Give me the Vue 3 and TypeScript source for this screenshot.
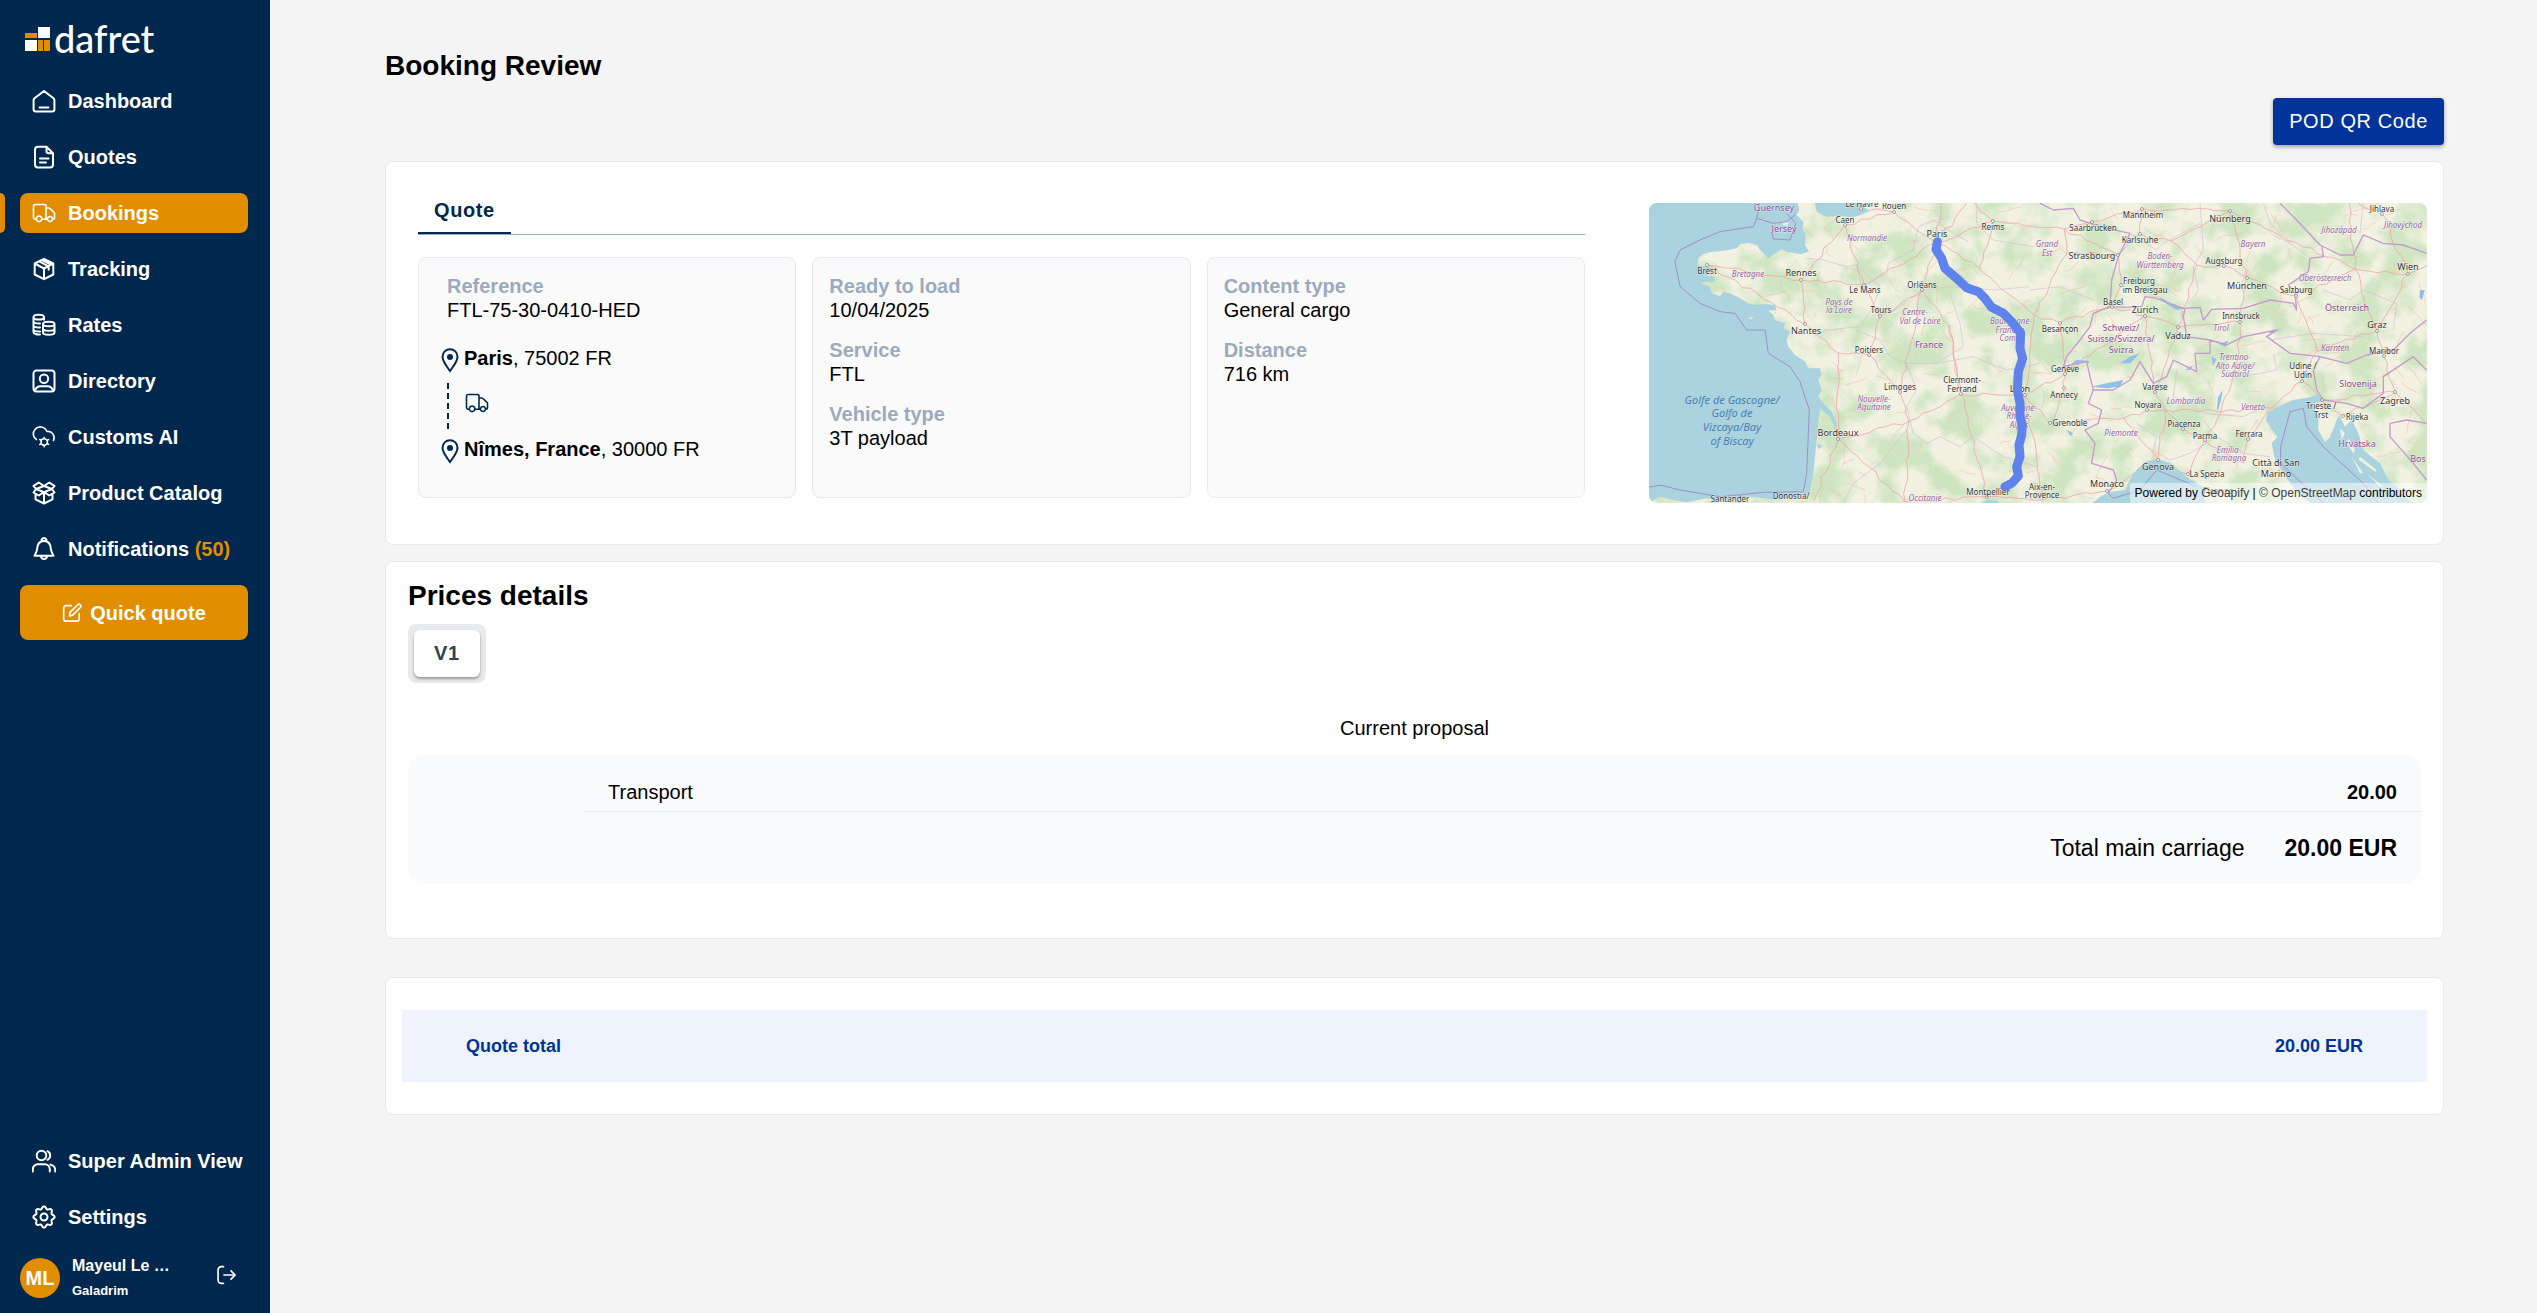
<script setup lang="ts">
interface NavItem {
  label: string
  icon: string
  active?: boolean
  thin?: boolean
  count?: number
}

interface InfoEntry {
  label: string
  value: string
}

type LabelKind = 'town' | 'city' | 'country' | 'region' | 'sea'
type MapLabel = [text: string, x: number, y: number, kind: LabelKind]
type Point = [number, number]

// Eight-lobed cog outline around the centre of a 24-unit box.
function cogOutline(): string {
  const points = Array.from({ length: 96 }, (_, i) => {
    const angle = (i / 96) * Math.PI * 2
    const radius = 9.4 + 1.2 * Math.cos(8 * angle)
    return `${(12 + radius * Math.cos(angle)).toFixed(2)} ${(12 + radius * Math.sin(angle)).toFixed(2)}`
  })
  return `M${points.join('L')}Z`
}

const icons: Record<string, string> = {
  home: 'M12 2 2.5 9.3a2 2 0 0 0-.9 1.7v9.6a2 2 0 0 0 2 2h16.8a2 2 0 0 0 2-2V11a2 2 0 0 0-.9-1.7ZM7.5 18.500h9',
  file: 'M14.5 1.8H6a3 3 0 0 0-3 3v14.6a3 3 0 0 0 3 3h12a3 3 0 0 0 3-3V8.2ZM14.5 1.8v4.4a2 2 0 0 0 2 2H21M8 13.500h8.500M8 17.500h6',
  truck: 'M4.5 18.3H3.2A1.7 1.7 0 0 1 1.5 16.600V5.200A1.700 1.700 0 0 1 3.200 3.500h9.300a1.500 1.500 0 0 1 1.500 1.500v13.300H9.500M14 7h2.600a2 2 0 0 1 1.300.5l3.900 3.600a2 2 0 0 1 .7 1.500v4a1.700 1.700 0 0 1-1.700 1.700M15.500 18.300H14M4.300 17.800a2.800 2.800 0 1 0 5.600 0a2.800 2.800 0 1 0-5.600 0M15.500 18a2.500 2.500 0 1 0 5 0a2.500 2.500 0 1 0-5 0',
  box: 'M12 1.800 21.300 6.500v11L12 22.200 2.700 17.500v-11ZM2.700 6.500 12 11.500l9.300-5M12 11.500v10.700M7.200 4.300l9.500 5v3.500M10 3l9 4.700',
  coins: 'M1.500 4.200c0-3.200 10.500-3.200 10.500 0s-10.500 3.200-10.500 0v15c0 1.500 3 2.400 6.500 2.200M12 4.200v2.500M1.500 8.500c0 1.500 3 2.200 6.500 2M1.500 12.500c0 1.500 3 2.200 6.500 2M1.500 16.500c0 1.500 3 2.200 6.500 2M11 11c0-3 11.500-3 11.500 0s-11.500 3-11.500 0v8.500c0 3 11.500 3 11.500 0V11M11 15.500c0 3 11.500 3 11.500 0',
  contact: 'M4.500 1.500h15a3 3 0 0 1 3 3v15a3 3 0 0 1-3 3h-15a3 3 0 0 1-3-3v-15a3 3 0 0 1 3-3ZM7.800 9.800a4.200 4.200 0 1 0 8.400 0a4.200 4.200 0 1 0-8.400 0M3 21.500c1-3 3-4.300 5.500-4.300h7c2.500 0 4.500 1.300 5.500 4.300',
  cloud: 'M4.500 14.500A6.500 6.500 0 0 1 3 4.500C6 .8 12.500.8 15 6.500c5-.8 8.500 4.200 6.500 9M9 17a3.200 3.200 0 1 0 6.400 0a3.200 3.200 0 1 0-6.400 0M12.200 12.500v1.300M12.200 20.200v1.500M7.800 14.500l1.500.9M15 18.500l1.600.9M7.800 19.500l1.500-.9M15 15.400l1.600-.9',
  openBox: 'M12 5 6.800 1.500 1.500 4.800 4 8l-2.500 3.500 5.300 3L12 11.200l5.200 3.300 5.300-3L20 8l2.500-3.200-5.300-3.300ZM4 8l8-3 8 3-8 3.200ZM3.500 13.500v4.800l8.500 4.200 8.500-4.200v-4.800M12 11.500v11',
  bell: 'M9.700 4.500a2.500 2.500 0 1 1 4.600 0M12 4C6.500 4 5.200 8 5 12.500c-.1 2.500-2 4.500-2.500 6.300h19c-.5-1.800-2.400-3.800-2.500-6.300C18.800 8 17.500 4 12 4M9 19c.2 4 5.800 4 6 0',
  users: 'M.8 22.500v-2.200a5 5 0 0 1 5-5h7a5 5 0 0 1 5 5v2.200M4.700 6.500a4.800 4.800 0 1 0 9.600 0a4.800 4.800 0 1 0-9.600 0M15.500 2.200a4.800 4.800 0 0 1 0 8.600M18.500 15.600c3 .8 4.700 2.700 4.700 5.200v1.700',
  gear: `${cogOutline()}M8.500 12a3.500 3.500 0 1 0 7 0a3.500 3.500 0 1 0-7 0`,
  edit: 'M11 3.200H5a3 3 0 0 0-3 3v12.600a3 3 0 0 0 3 3h12.600a3 3 0 0 0 3-3v-6M9 15.500l.6-4.200 9.200-9.200a2.200 2.200 0 0 1 3.200 3.200l-9.200 9.200Z',
  logout: 'M9 2H6.500a4 4 0 0 0-4 4v12a4 4 0 0 0 4 4H9M9.500 12h13M18 7l5 5-5 5',
}

const navItems: NavItem[] = [
  { label: 'Dashboard', icon: 'home' },
  { label: 'Quotes', icon: 'file' },
  { label: 'Bookings', icon: 'truck', active: true, thin: true },
  { label: 'Tracking', icon: 'box' },
  { label: 'Rates', icon: 'coins' },
  { label: 'Directory', icon: 'contact' },
  { label: 'Customs AI', icon: 'cloud', thin: true },
  { label: 'Product Catalog', icon: 'openBox' },
  { label: 'Notifications', icon: 'bell', count: 50 },
]

const footerItems: NavItem[] = [
  { label: 'Super Admin View', icon: 'users' },
  { label: 'Settings', icon: 'gear' },
]

const loadInfo: InfoEntry[] = [
  { label: 'Ready to load', value: '10/04/2025' },
  { label: 'Service', value: 'FTL' },
  { label: 'Vehicle type', value: '3T payload' },
]

const cargoInfo: InfoEntry[] = [
  { label: 'Content type', value: 'General cargo' },
  { label: 'Distance', value: '716 km' },
]

const places: Record<string, Point> = {
  caen: [196, 22], rouen: [245, 9], havre: [212, 6], paris: [288, 40], reims: [344, 18],
  brest: [58, 62], rennes: [152, 77], mans: [215, 82], orleans: [273, 87], tours: [231, 113],
  nantes: [156, 121], poitiers: [220, 152], limoges: [251, 189], clermont: [312, 191], lyon: [376, 192],
  bordeaux: [189, 236], montpellier: [338, 294], mannheim: [493, 6], saar: [443, 19], karlsruhe: [491, 31],
  strasbourg: [469, 52], freiburg: [472, 82], basel: [463, 104], zurich: [496, 113], vaduz: [529, 124],
  besancon: [411, 120], geneve: [416, 171], annecy: [415, 185], varese: [506, 189], novara: [498, 207],
  piacenza: [534, 226], parma: [556, 237], ferrara: [599, 236], grenoble: [401, 220], genova: [509, 257],
  spezia: [539, 271], monaco: [458, 288], nurnberg: [581, 8], augsburg: [575, 63], munchen: [598, 75],
  salzburg: [647, 93], innsbruck: [591, 119], udine: [653, 178], trieste: [673, 197], rijeka: [694, 213],
  zagreb: [746, 189], graz: [728, 128], maribor: [735, 153], wien: [759, 71], jihlava: [733, 11],
}

const junctions: Record<string, Point> = {
  toulouse: [256, 299], torino: [475, 215], bologna: [595, 260], verona: [572, 209], venice: [622, 205],
  dijon: [385, 112], troyes: [330, 65], aix: [394, 297], milano: [516, 207], metz: [415, 26],
  linz: [706, 66], ulm: [548, 62], brive: [260, 218], bourges: [300, 122], niort: [189, 150],
  nancy: [418, 50], lille: [320, -4], north: [292, -4], bayonne: [165, 298], northEast: [700, -4],
  stuttgart: [522, 38], east: [782, 60], southEast: [782, 226], villach: [668, 148], bolzano: [588, 156],
}

const roadLinks =
  'havre-rouen rouen-paris caen-rouen caen-rennes caen-mans brest-rennes rennes-mans rennes-nantes nantes-brest mans-paris mans-tours orleans-paris orleans-tours tours-poitiers nantes-niort niort-poitiers niort-bordeaux bordeaux-brive brive-limoges limoges-poitiers limoges-orleans brive-clermont clermont-lyon clermont-bourges bourges-orleans bordeaux-toulouse bordeaux-bayonne toulouse-montpellier brive-toulouse clermont-montpellier lyon-dijon dijon-besancon dijon-nancy nancy-metz metz-saar saar-mannheim metz-reims reims-paris reims-troyes troyes-dijon paris-troyes paris-north paris-lille reims-lille nancy-strasbourg metz-strasbourg strasbourg-karlsruhe karlsruhe-mannheim karlsruhe-stuttgart stuttgart-ulm ulm-augsburg augsburg-munchen munchen-nurnberg mannheim-nurnberg stuttgart-nurnberg strasbourg-freiburg freiburg-basel basel-besancon basel-zurich zurich-vaduz ulm-vaduz lyon-geneve geneve-annecy annecy-grenoble grenoble-lyon lyon-aix aix-monaco aix-montpellier grenoble-torino torino-novara novara-milano milano-varese varese-zurich vaduz-varese milano-piacenza piacenza-parma parma-bologna bologna-ferrara ferrara-venice venice-verona verona-milano torino-genova genova-milano genova-spezia spezia-parma monaco-genova verona-bolzano bolzano-innsbruck innsbruck-munchen innsbruck-vaduz munchen-salzburg salzburg-linz linz-wien wien-graz graz-maribor maribor-zagreb zagreb-rijeka rijeka-trieste trieste-udine udine-venice udine-villach villach-salzburg villach-graz graz-linz nurnberg-linz wien-jihlava jihlava-northEast linz-northEast wien-east zagreb-southEast zagreb-trieste geneve-zurich bourges-clermont besancon-geneve verona-parma venice-trieste'

function createRandom(seed: number): () => number {
  let state = seed
  return () => {
    state = (state * 16807) % 2147483647
    return state / 2147483647
  }
}

const random = createRandom(4217)

function windingPath(from: Point, to: Point): string {
  const dx = to[0] - from[0]
  const dy = to[1] - from[1]
  const steps = Math.max(3, Math.round(Math.hypot(dx, dy) / 8))
  let path = `M${from[0]} ${from[1]}`
  for (let i = 1; i < steps; i++) {
    const x = from[0] + (dx * i) / steps + (random() - 0.5) * 4
    const y = from[1] + (dy * i) / steps + (random() - 0.5) * 4
    path += `L${x.toFixed(1)} ${y.toFixed(1)}`
  }
  return `${path}L${to[0]} ${to[1]}`
}

const nodes = { ...places, ...junctions }
const roads = roadLinks
  .split(' ')
  .map((link) => {
    const [a, b] = link.split('-')
    return windingPath(nodes[a], nodes[b])
  })
  .join('')

const minorRoads = Array.from({ length: 230 }, () => {
  const x = random() * 778
  const y = random() * 300
  const angle = random() * Math.PI
  const length = 8 + random() * 18
  return windingPath([Math.round(x), Math.round(y)], [
    Math.round(x + Math.cos(angle) * length),
    Math.round(y + Math.sin(angle) * length),
  ])
}).join('')

const markers = Object.values(places)

const labelSizes: Record<LabelKind, number> = { town: 8, city: 9, country: 9, region: 8, sea: 11 }

const mapLabels: MapLabel[] = [
  ['Guernsey', 125, 5, 'country'], ['Jersey', 135, 26, 'country'], ['Le Havre', 213, 1, 'town'],
  ['Rouen', 245, 3, 'town'], ['Caen', 196, 17, 'town'], ['Normandie', 218, 35, 'region'],
  ['Paris', 288, 31, 'city'], ['Reims', 344, 24, 'town'], ['Grand', 398, 41, 'region'], ['Est', 398, 50, 'region'],
  ['Brest', 58, 68, 'town'], ['Bretagne', 99, 71, 'region'], ['Rennes', 152, 70, 'city'],
  ['Orléans', 273, 82, 'town'], ['Le Mans', 216, 87, 'town'], ['Pays de', 190, 99, 'region'],
  ['la Loire', 190, 107, 'region'], ['Tours', 232, 107, 'town'], ['Centre-', 266, 109, 'region'],
  ['Val de Loire', 271, 118, 'region'], ['Nantes', 157, 128, 'city'], ['Poitiers', 220, 147, 'town'],
  ['France', 280, 142, 'country'], ['Bourgogne-', 362, 118, 'region'], ['Franche-', 362, 127, 'region'],
  ['Comté', 362, 135, 'region'], ['Limoges', 251, 184, 'town'], ['Clermont-', 313, 177, 'town'],
  ['Ferrand', 313, 186, 'town'], ['Lyon', 371, 186, 'city'], ['Nouvelle-', 225, 196, 'region'],
  ['Aquitaine', 225, 204, 'region'], ['Auvergne-', 370, 205, 'region'], ['Rhône-', 370, 213, 'region'],
  ['Alpes', 370, 222, 'region'], ['Golfe de Gascogne/', 83, 197, 'sea'], ['Golfo de', 83, 210, 'sea'],
  ['Vizcaya/Bay', 83, 224, 'sea'], ['of Biscay', 83, 238, 'sea'], ['Bordeaux', 189, 230, 'city'],
  ['Montpellier', 339, 289, 'town'], ['Aix-en-', 393, 284, 'town'], ['Provence', 393, 292, 'town'],
  ['Occitanie', 276, 295, 'region'], ['Santander', 81, 296, 'town'], ['Donostia/', 142, 293, 'town'],
  ['Mannheim', 494, 12, 'town'], ['Saarbrücken', 444, 25, 'town'], ['Karlsruhe', 491, 37, 'town'],
  ['Strasbourg', 443, 53, 'city'], ['Boden-', 511, 53, 'region'], ['Württemberg', 511, 62, 'region'],
  ['Freiburg', 490, 78, 'town'], ['im Breisgau', 496, 87, 'town'], ['Basel', 464, 99, 'town'],
  ['Zürich', 496, 107, 'city'], ['Besançon', 411, 126, 'town'], ['Schweiz/', 472, 125, 'country'],
  ['Suisse/Svizzera/', 472, 136, 'country'], ['Svizra', 472, 147, 'country'], ['Vaduz', 529, 133, 'city'],
  ['Genève', 416, 166, 'town'], ['Annecy', 415, 192, 'town'], ['Varese', 506, 184, 'town'],
  ['Novara', 499, 202, 'town'], ['Lombardia', 537, 198, 'region'], ['Piacenza', 535, 221, 'town'],
  ['Parma', 556, 233, 'town'], ['Ferrara', 600, 231, 'town'], ['Veneto', 604, 204, 'region'],
  ['Grenoble', 421, 220, 'town'], ['Piemonte', 472, 230, 'region'], ['Emilia-', 580, 247, 'region'],
  ['Romagna', 580, 255, 'region'], ['Città di San', 627, 260, 'city'], ['Marino', 627, 271, 'city'],
  ['Genova', 509, 264, 'city'], ['La Spezia', 558, 271, 'town'], ['Monaco', 458, 281, 'city'],
  ['Firenze', 569, 288, 'city'], ['Nürnberg', 581, 16, 'city'], ['Bayern', 604, 41, 'region'],
  ['Augsburg', 575, 58, 'town'], ['München', 598, 83, 'city'], ['Salzburg', 647, 87, 'town'],
  ['Innsbruck', 592, 113, 'town'], ['Tirol', 572, 125, 'region'], ['Trentino-', 586, 154, 'region'],
  ['Alto Adige/', 586, 163, 'region'], ['Südtirol', 586, 171, 'region'], ['Udine /', 654, 163, 'town'],
  ['Udin', 654, 172, 'town'], ['Trieste /', 672, 203, 'town'], ['Trst', 672, 212, 'town'],
  ['Rijeka', 708, 214, 'town'], ['Slovenija', 709, 181, 'country'], ['Zagreb', 746, 198, 'city'],
  ['Hrvatska', 708, 241, 'country'], ['Österreich', 698, 105, 'country'], ['Graz', 728, 122, 'city'],
  ['Kärnten', 686, 145, 'region'], ['Maribor', 735, 148, 'town'], ['Wien', 759, 64, 'city'],
  ['Oberösterreich', 676, 75, 'region'], ['Jihozápad', 690, 27, 'region'], ['Jihovýchod', 754, 22, 'region'],
  ['Jihlava', 733, 6, 'town'], ['Bos', 769, 256, 'country'],
]
</script>

<template>
  <div class="app">
    <aside class="sidebar">
      <a class="logo" href="#" aria-label="dafret">
        <svg width="25" height="26" viewBox="0 0 25 26" aria-hidden="true">
          <path fill="#fff" d="M13 2h12v11H13zM0 15h12v11H0z" />
          <path fill="#e08e00" d="M0 8h12v5H0zM13 15h5v11h-5zM19 15h6v11h-6z" />
        </svg>
        <span class="wordmark">dafret</span>
      </a>

      <nav class="nav" aria-label="Main">
        <a v-for="item in navItems" :key="item.label" href="#" class="nav-item" :class="{ active: item.active }">
          <svg class="icon" :class="{ thin: item.thin }" viewBox="0 0 24 24" aria-hidden="true">
            <path :d="icons[item.icon]" />
          </svg>
          <span>{{ item.label }} <span v-if="item.count" class="count">({{ item.count }})</span></span>
        </a>
      </nav>

      <button type="button" class="quick-quote">
        <svg class="icon" viewBox="0 0 24 24" aria-hidden="true"><path :d="icons.edit" /></svg>
        Quick quote
      </button>

      <nav class="nav nav-footer" aria-label="Account">
        <a v-for="item in footerItems" :key="item.label" href="#" class="nav-item">
          <svg class="icon" viewBox="0 0 24 24" aria-hidden="true"><path :d="icons[item.icon]" /></svg>
          <span>{{ item.label }}</span>
        </a>
      </nav>

      <div class="user">
        <span class="avatar">ML</span>
        <div class="user-text">
          <div class="user-name">Mayeul Le …</div>
          <div class="user-company">Galadrim</div>
        </div>
        <button type="button" class="logout" aria-label="Log out">
          <svg class="icon" viewBox="0 0 24 24" aria-hidden="true"><path :d="icons.logout" /></svg>
        </button>
      </div>
    </aside>

    <main class="main">
      <h1>Booking Review</h1>
      <div class="actions">
        <button type="button" class="primary">POD QR Code</button>
      </div>

      <section class="card summary">
        <div class="details">
          <div class="tabs" role="tablist">
            <button type="button" class="tab" role="tab" aria-selected="true">Quote</button>
          </div>
          <div class="info-grid">
            <div class="info route">
              <div class="reference">
                <div class="label">Reference</div>
                <div>FTL-75-30-0410-HED</div>
              </div>
              <div class="stop">
                <svg class="pin" viewBox="0 0 24 28" aria-hidden="true">
                  <path d="M12 25C8.500 20 4.500 15.500 4.500 10.700a7.500 7.500 0 0 1 15 0C19.500 15.500 15.500 20 12 25Z" />
                  <circle cx="12" cy="11" r="3" />
                </svg>
                <span><strong>Paris</strong>, 75002 FR</span>
              </div>
              <div class="leg">
                <svg class="icon thin" viewBox="0 0 24 24" aria-hidden="true"><path :d="icons.truck" /></svg>
              </div>
              <div class="stop">
                <svg class="pin" viewBox="0 0 24 28" aria-hidden="true">
                  <path d="M12 25C8.500 20 4.500 15.500 4.500 10.700a7.500 7.500 0 0 1 15 0C19.500 15.500 15.500 20 12 25Z" />
                  <circle cx="12" cy="11" r="3" />
                </svg>
                <span><strong>Nîmes, France</strong>, 30000 FR</span>
              </div>
            </div>
            <div class="info">
              <div v-for="entry in loadInfo" :key="entry.label">
                <div class="label">{{ entry.label }}</div>
                <div>{{ entry.value }}</div>
              </div>
            </div>
            <div class="info">
              <div v-for="entry in cargoInfo" :key="entry.label">
                <div class="label">{{ entry.label }}</div>
                <div>{{ entry.value }}</div>
              </div>
            </div>
          </div>
        </div>

        <div class="map">
          <svg class="map-canvas" viewBox="0 0 778 300" preserveAspectRatio="xMidYMid slice" role="img" aria-label="Route map">
            <defs>
              <filter id="relief" x="0" y="0" width="100%" height="100%" color-interpolation-filters="sRGB">
                <feTurbulence type="fractalNoise" baseFrequency="0.03" numOctaves="5" seed="8" />
                <feColorMatrix values="0 0 0 0 0.78  0 0 0 0 0.89  0 0 0 0 0.73  4 0 0 0 -1.6" />
              </filter>
            </defs>
            <rect width="778" height="300" fill="#f2f1e2" />
            <rect width="778" height="300" filter="url(#relief)" opacity="0.8" />
            <path class="minor-road" :d="minorRoads" />
            <path class="road" :d="roads" />

            <g transform="translate(-9 -13) scale(0.333333)">
              <path class="water" d="M20 30H470L478 60 470 75 490 95 488 115 497 135 495 165 507 185 480 193 460 188 440 185 425 178 405 190 385 205 370 190 358 178 350 165 325 158 300 163 290 175 265 180 240 184 215 185 190 192 175 205 173 225 205 230 225 238 215 250 195 255 225 262 222 275 200 275 180 280 210 290 215 310 240 318 250 305 275 312 300 325 325 340 345 345 375 342 405 345 410 360 385 362 400 375 405 390 435 400 430 415 450 425 440 450 445 470 465 495 495 515 505 535 540 535 545 555 535 570 545 600 535 620 550 640 575 665 590 700 588 720 570 680 540 655 535 700 530 750 525 800 520 850 510 905 500 915 470 922 400 928 330 920 290 927 240 932 200 925 140 937 100 930 60 920 30 937H20Z" />
              <path class="water" d="M523 30 530 65 560 80 600 78 640 82 662 75 690 62 672 52 690 30ZM1010 945 1040 930 1075 933 1070 945ZM530 760l18 8-12 10Z" />
              <path class="land" d="M428 95l18 2-4 10-14-2ZM325 383l14-3-4 8Z" />
              <path class="border sea-border" d="M465 75 440 95 400 100 350 85 340 110 240 125 180 150 120 180 105 215 120 290 180 340 240 365 285 370 320 420 375 420 385 490 450 530 480 575 508 660 500 850 490 905 370 907 240 920 120 900 60 885 27 892M350 85 355 60 358 30M440 70 468 100 450 150 400 147 395 125" />
              <path class="border faint" d="M500 205 550 210 620 230 650 225 665 290 740 250 745 220 820 180 835 110 880 90 940 130 985 155M650 225 720 290 700 350 660 410 560 420 520 440M750 370 850 300 930 290 1060 300 1170 290M650 420 720 450 750 500 800 520 890 520 970 470 960 400 930 310M800 520 830 600 800 650 820 730 860 760 900 740 960 770 1000 740 1090 800 1190 830M800 720 720 820 640 880 610 940M890 520 1000 500 1100 540 1200 520M1010 40 1010 100 1060 150 1180 170" />
            </g>
            <g transform="translate(381 -13) scale(0.333333)">
              <path class="water" d="M180 945 215 917 245 905 285 900 310 850 345 815 380 808 420 818 445 840 475 865 520 890 525 945Z" />
              <path class="water" d="M712 668 745 650 790 630 840 622 865 613 880 635 845 640 865 680 865 720 885 757 900 742 920 690 928 675 945 710 965 690 985 730 1000 780 1050 820 1075 870 1110 900 1150 945H850L800 905 760 850 735 810 725 760 742 740 725 718 708 690Z" />
              <path class="land" d="M930 715 945 730 935 750ZM955 745 975 780 970 790 950 760ZM990 800 1040 840 1035 845 985 808ZM1010 850 1060 890 1050 890ZM965 800 1000 850 990 850Z" />
              <path class="lake" d="M120 525 140 510 175 512 180 520 150 517ZM385 318 420 340 460 355 440 360 400 335ZM560 658 565 620 578 600 572 635 565 658ZM270 520 300 500 330 490 300 520ZM185 590 230 580 280 570 270 590 230 595ZM465 540 490 525 480 540ZM545 500l14 8-10 20ZM565 462l30-10-8 18ZM715 425l40-8-30 14ZM1170 300l14 0-8 30-8-8ZM110 720l20 10-8 8Z" />
              <path class="border" d="M30 40 70 60 130 55 150 90 210 110 300 130 265 200 245 270 240 350 290 352 335 350 345 320 380 325 460 355 510 352 520 390 545 358 640 355 720 330 790 340 800 360 795 310 775 285 835 245 840 205 880 200 875 165M750 40 800 90 870 165 930 195 970 195 1000 135 1060 160 1120 165 1190 190M240 350 190 370 180 410 150 450 110 500 100 530 170 515 180 560 190 600 250 600 300 570 330 515 370 580 410 560 430 510 500 545 495 490 540 490 540 450 470 440 460 380 465 355M540 450 590 465 640 440 740 420 710 440 780 490 870 500 950 520 1010 495 1090 480 1140 430 1190 390M190 600 175 640 215 660 205 700 165 720 195 760 185 820 250 840 260 870 235 910M870 500 850 540 860 600 880 630 950 640 1000 655 1060 610 1060 560 1150 500 1190 540M1190 700 1130 690 1080 700 1080 740 1150 820 1190 870" />
              <path class="border sea-border" d="M820 655 780 665 752 770 752 820 880 940M820 655 830 710 880 770 1000 880 1050 945M235 910 250 925 330 900 380 840 500 890" />
              <path class="border faint" d="M510 40 520 180 490 230 505 300 470 350M300 130 380 180 400 160 510 100M700 40 720 100 760 140M835 200 780 160 720 130M880 300 960 330 1000 300 1100 340 1090 420M320 700 380 740 370 780 420 810M440 540 430 620 520 670 640 680 720 640M560 740 640 790 720 800M520 690 560 740 480 790 420 810M720 450 850 430 1000 440M640 560 740 540 730 490M1000 40 990 130M0 300 90 290 190 330" />
            </g>

            <g class="marks">
              <circle v-for="(point, index) in markers" :key="index" :cx="point[0]" :cy="point[1]" r="1.500" />
            </g>
            <g>
              <text
                v-for="label in mapLabels"
                :key="label[0]"
                class="map-label"
                :class="label[3]"
                :x="label[1]"
                :y="Math.round(label[2] + labelSizes[label[3]] * 0.36)"
                :font-size="labelSizes[label[3]]"
              >{{ label[0] }}</text>
            </g>
            <path
              class="journey"
              transform="translate(-9 -13) scale(0.333333)"
              d="M892 155 888 178 905 205 915 235 950 265 980 293 1015 305 1035 325 1055 352 1090 370 1115 395 1142 430 1140 475 1148 505 1135 545 1132 600 1140 640 1140 680 1147 705 1145 735 1137 765 1140 800 1130 830 1135 858 1115 880 1095 890"
            />
          </svg>
          <div class="attribution">
            Powered by <a href="#">Geoapify</a> | <a href="#">© OpenStreetMap</a> contributors
          </div>
        </div>
      </section>

      <section class="card prices">
        <h2>Prices details</h2>
        <div class="segmented">
          <button type="button" class="segment">V1</button>
        </div>
        <table class="price-table">
          <caption>Current proposal</caption>
          <tbody>
            <tr>
              <td class="spacer"></td>
              <th scope="row" class="line">Transport</th>
              <td class="line amount">20.00</td>
            </tr>
          </tbody>
          <tfoot>
            <tr>
              <td class="spacer"></td>
              <th scope="row" class="total-label">Total main carriage</th>
              <td class="total amount">20.00 EUR</td>
            </tr>
          </tfoot>
        </table>
      </section>

      <section class="card quote-total">
        <div class="total-bar">
          <span>Quote total</span>
          <span>20.00 EUR</span>
        </div>
      </section>
    </main>
  </div>
</template>

<style>
body {
  margin: 0;
  background: #f4f4f4;
}
</style>

<style scoped>
* {
  box-sizing: border-box;
}

.app {
  display: flex;
  min-height: 100vh;
  font-family: "Liberation Sans", Arial, sans-serif;
  font-size: 20px;
  line-height: 24px;
  color: #000;
}

button {
  border: 0;
  font: inherit;
  cursor: pointer;
}

a {
  color: inherit;
  text-decoration: none;
}

.icon {
  flex: none;
  width: 24px;
  height: 24px;
  fill: none;
  stroke: currentColor;
  stroke-width: 2;
  stroke-linecap: round;
  stroke-linejoin: round;
}

.icon.thin {
  stroke-width: 1.6;
}

/* Sidebar */
.sidebar {
  display: flex;
  flex: none;
  flex-direction: column;
  width: 270px;
  padding: 20px 22px 10px 20px;
  background: #00274e;
  color: #fff;
  font-weight: 700;
}

.logo {
  display: flex;
  align-items: center;
  gap: 4px;
  height: 36px;
  margin-bottom: 25px;
  padding-left: 5px;
}

.wordmark {
  font-family: "Lato Medium", Lato, sans-serif;
  font-size: 38px;
  font-weight: 500;
  line-height: 36px;
}

.nav {
  display: flex;
  flex-direction: column;
  gap: 16px;
}

.nav-item {
  position: relative;
  display: flex;
  align-items: center;
  gap: 12px;
  height: 40px;
  padding-left: 12px;
  border-radius: 8px;
  white-space: nowrap;
}

.nav-item.active {
  background: #e08e00;
}

.nav-item.active::before {
  content: "";
  position: absolute;
  left: -20px;
  width: 5px;
  height: 40px;
  border-radius: 0 6px 6px 0;
  background: #e08e00;
}

.count {
  color: #e08e00;
}

.quick-quote {
  display: flex;
  align-items: center;
  justify-content: center;
  gap: 8px;
  height: 55px;
  margin-top: 16px;
  border-radius: 8px;
  background: #e08e00;
  color: #fff;
}

.quick-quote .icon {
  width: 20px;
  height: 20px;
}

.nav-footer {
  margin-top: auto;
}

.user {
  display: flex;
  align-items: center;
  gap: 12px;
  margin-top: 16px;
}

.avatar {
  flex: none;
  width: 40px;
  height: 40px;
  border-radius: 50%;
  background: #e08e00;
  line-height: 40px;
  text-align: center;
}

.user-text {
  flex: 1;
  line-height: 25px;
}

.user-name {
  font-size: 16px;
}

.user-company {
  font-size: 13px;
}

.logout {
  display: flex;
  margin-right: 12px;
  margin-bottom: 6px;
  padding: 0;
  background: none;
  color: #fff;
}

.logout .icon {
  width: 20px;
  height: 20px;
}

/* Page */
.main {
  flex: 1;
  min-width: 0;
  padding: 50px 93px 50px 115px;
}

h1,
h2 {
  margin: 0;
  font-size: 28px;
  line-height: 32px;
}

.actions {
  display: flex;
  justify-content: flex-end;
  margin: 16px 0;
}

.primary {
  padding: 6px 16px;
  border-radius: 4px;
  background: #00349b;
  box-shadow: 0 2px 4px rgba(0, 0, 0, 0.35);
  color: #fff;
  line-height: 35px;
  letter-spacing: 0.03em;
}

.card {
  border: 1px solid #e9eaee;
  border-radius: 8px;
  background: #fff;
}

/* Booking summary */
.summary {
  display: grid;
  grid-template-columns: minmax(0, 3fr) minmax(0, 2fr);
  gap: 64px;
  padding: 24px 16px 24px 32px;
}

.details {
  padding-bottom: 22px;
}

.tabs {
  display: flex;
  margin-bottom: 22px;
  border-bottom: 1px solid #9aabbd;
}

.tab {
  height: 48px;
  padding: 2px 16px 0;
  border-bottom: 2px solid #00274e;
  background: none;
  color: #00274e;
  font-weight: 700;
  letter-spacing: 0.03em;
}

.info-grid {
  display: grid;
  grid-template-columns: repeat(3, minmax(0, 1fr));
  gap: 16px;
}

.info {
  display: flex;
  flex-direction: column;
  gap: 16px;
  min-height: 241px;
  padding: 16px;
  border: 1px solid #e9eaee;
  border-radius: 8px;
  background: #fafafa;
}

.label {
  color: #9aabbd;
  font-weight: 700;
}

.info.route {
  gap: 0;
  padding-left: 19px;
}

.reference {
  margin-bottom: 24px;
  padding-left: 9px;
}

.stop {
  display: flex;
  gap: 2px;
  height: 28px;
}

.pin {
  flex: none;
  width: 24px;
  height: 28px;
  fill: none;
  stroke: #00274e;
  stroke-width: 2;
}

.pin circle {
  fill: #00274e;
  stroke: none;
}

.leg {
  height: 46px;
  margin: 9px 0 8px 9px;
  padding: 8px 16px;
  border-left: 2px dashed #00274e;
  color: #00274e;
}

/* Map */
.map {
  position: relative;
  align-self: center;
  height: 300px;
  overflow: hidden;
  border-radius: 8px;
}

.map-canvas {
  display: block;
  width: 100%;
  height: 100%;
}

.minor-road {
  fill: none;
  stroke: #f8b9a0;
  stroke-width: 0.5;
}

.road {
  fill: none;
  stroke: #f0a3ac;
  stroke-width: 0.8;
}

.water {
  fill: #aad3df;
}

.lake {
  fill: #8fc0ea;
}

.land {
  fill: #eff0df;
}

.border {
  fill: none;
  stroke: #c49bca;
  stroke-width: 4;
  stroke-linejoin: round;
}

.border.sea-border {
  stroke: #a08fc8;
  stroke-width: 3;
}

.border.faint {
  stroke: #d6bcda;
  stroke-width: 2;
}

.marks {
  fill: #fff;
  stroke: #666;
  stroke-width: 0.6;
}

.map-label {
  font-family: "Noto Sans", sans-serif;
  fill: #333;
  stroke: rgba(255, 255, 255, 0.6);
  stroke-width: 1;
  paint-order: stroke;
  text-anchor: middle;
}

.map-label.country {
  fill: #8b4a94;
}

.map-label.region {
  fill: #9a66a6;
  font-style: italic;
}

.map-label.sea {
  fill: #4a80b5;
  stroke: none;
  font-style: italic;
}

.journey {
  fill: none;
  stroke: #5f82ec;
  stroke-width: 27;
  stroke-linecap: round;
  stroke-linejoin: round;
}

.attribution {
  position: absolute;
  right: 0;
  bottom: 0;
  padding: 0 5px;
  background: rgba(255, 255, 255, 0.5);
  font-size: 12px;
  line-height: 20px;
  white-space: nowrap;
}

.attribution a {
  color: #404040;
}

/* Prices */
.prices {
  margin-top: 16px;
  padding: 18px 22px 54px;
}

.segmented {
  display: flex;
  width: max-content;
  margin-top: 12px;
  padding: 6px;
  border-radius: 8px;
  background: #e9eaee;
}

.segment {
  padding: 6px 20px;
  border-radius: 6px;
  background: #fff;
  box-shadow: 0 2px 3px rgba(0, 0, 0, 0.35);
  color: #344054;
  font-weight: 700;
  line-height: 35px;
  letter-spacing: 0.03em;
}

.price-table {
  width: 100%;
  margin-top: 33px;
  border-spacing: 0;
}

.price-table caption {
  padding-bottom: 15px;
}

.price-table th,
.price-table td {
  background: #f9fafc;
}

.spacer {
  width: 176px;
  padding: 0;
}

.price-table tbody td:first-child {
  border-top-left-radius: 16px;
}

.price-table tbody td:last-child {
  border-top-right-radius: 16px;
}

.price-table tfoot td:first-child {
  border-bottom-left-radius: 16px;
}

.price-table tfoot td:last-child {
  border-bottom-right-radius: 16px;
}

.line {
  padding: 25px 24px 7px;
  border-bottom: 1px solid #e9eaee;
  font-weight: 400;
  text-align: left;
}

.amount {
  width: 1px;
  font-weight: 700;
  text-align: right;
  white-space: nowrap;
}

.total-label,
.total {
  padding: 20px 24px 20px 0;
  font-size: 23px;
  line-height: 32px;
}

.total-label {
  padding-right: 40px;
  font-weight: 400;
  text-align: right;
}

.quote-total {
  margin-top: 38px;
  padding: 32px 16px;
}

.total-bar {
  display: flex;
  justify-content: space-between;
  padding: 24px 64px;
  background: #eff3fe;
  color: #00349b;
  font-size: 18px;
  font-weight: 700;
}
</style>
